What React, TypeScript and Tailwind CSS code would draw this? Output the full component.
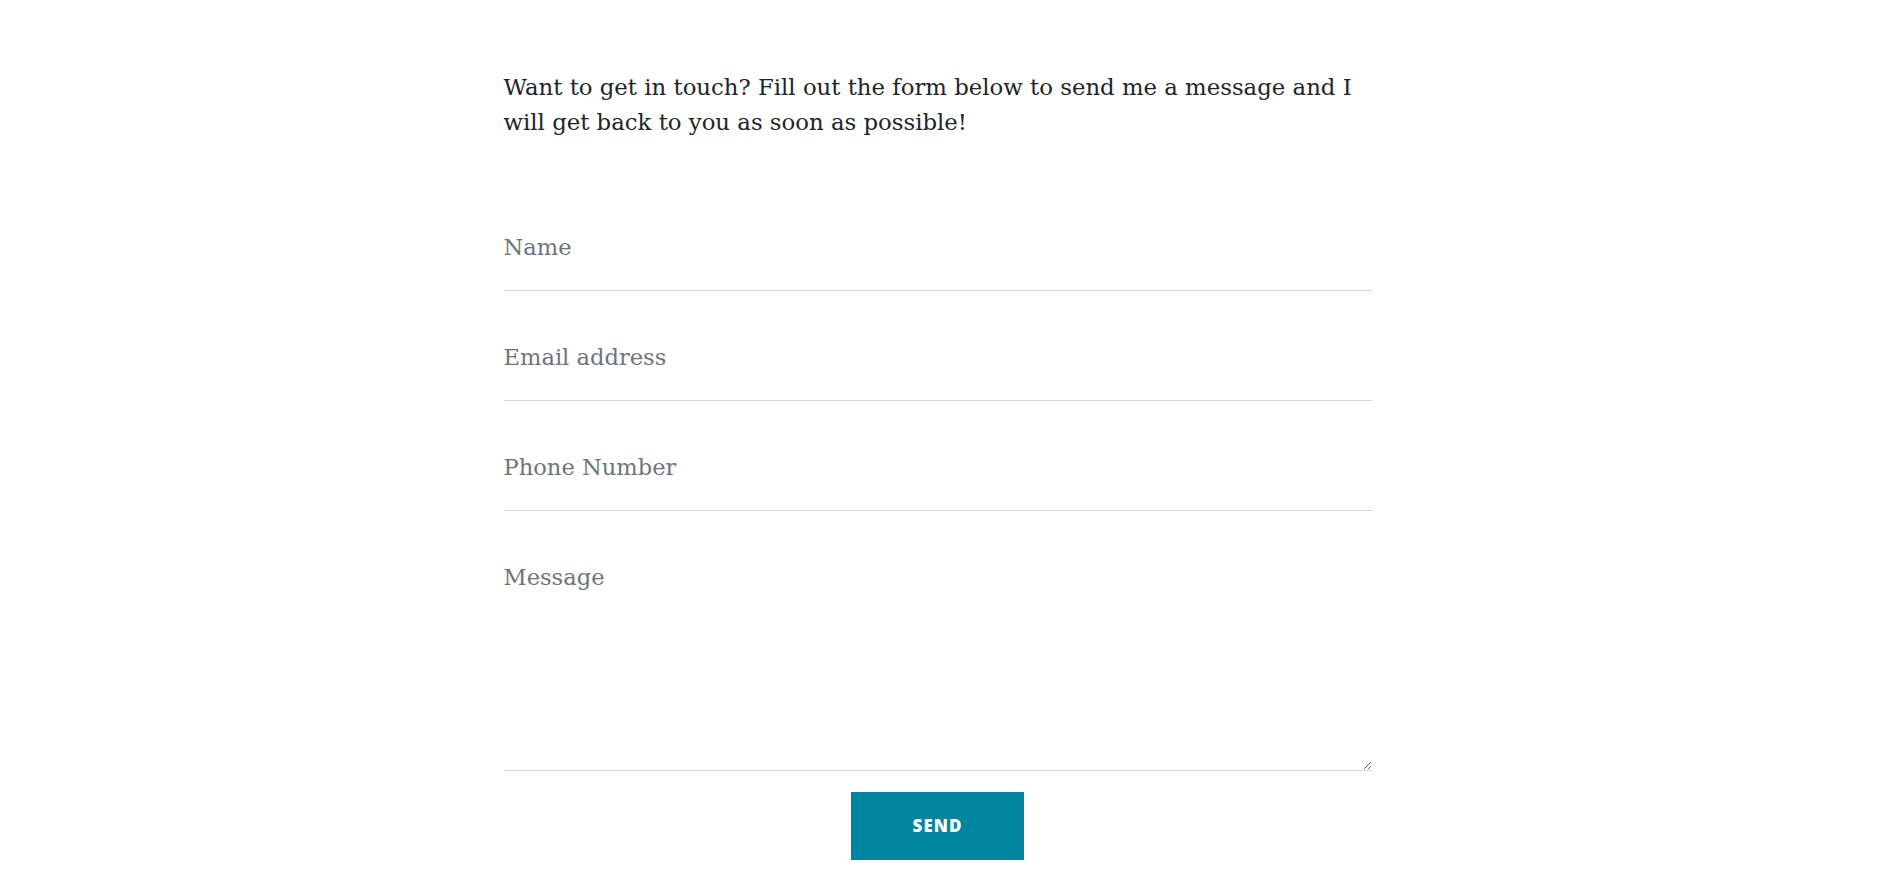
import React from "react";

const serif = "font-['DejaVu_Serif',serif]";

function Field({ placeholder, type = "text" }: { placeholder: string; type?: string }) {
  return (
    <div className="border-b border-[#d6d6d6] pt-[48px] pb-[25px]">
      <input
        type={type}
        placeholder={placeholder}
        className={`${serif} block h-[36px] w-full bg-transparent px-0 text-[22.6px] leading-[36px] text-[#212529] outline-none placeholder:text-[#6c757d]`}
      />
    </div>
  );
}

export default function App() {
  return (
    <div className="min-h-screen bg-white pt-[70px]">
      <div className="mx-auto w-[874px] pr-[6px]">
        <p className={`${serif} text-[22.8px] leading-[35px] text-[#212529]`}>
          Want to get in touch? Fill out the form below to send me a message and I will get back to
          you as soon as possible!
        </p>

        <form className="mt-[41px]" onSubmit={(e) => e.preventDefault()}>
          <Field placeholder="Name" />
          <Field placeholder="Email address" type="email" />
          <Field placeholder="Phone Number" type="tel" />
          <div className="border-b border-[#d6d6d6]">
            <textarea
              placeholder="Message"
              className={`${serif} block h-[259px] w-full bg-transparent px-0 pt-[48px] text-[22.6px] leading-[36px] text-[#212529] outline-none placeholder:text-[#6c757d]`}
            />
          </div>
          <div className="mt-[21px] flex justify-center">
            <button
              type="submit"
              className="h-[68px] w-[173px] bg-[#0085a1] font-['Open_Sans',sans-serif] text-[17px] font-extrabold uppercase tracking-[1px] text-white"
            >
              Send
            </button>
          </div>
        </form>
      </div>
    </div>
  );
}
